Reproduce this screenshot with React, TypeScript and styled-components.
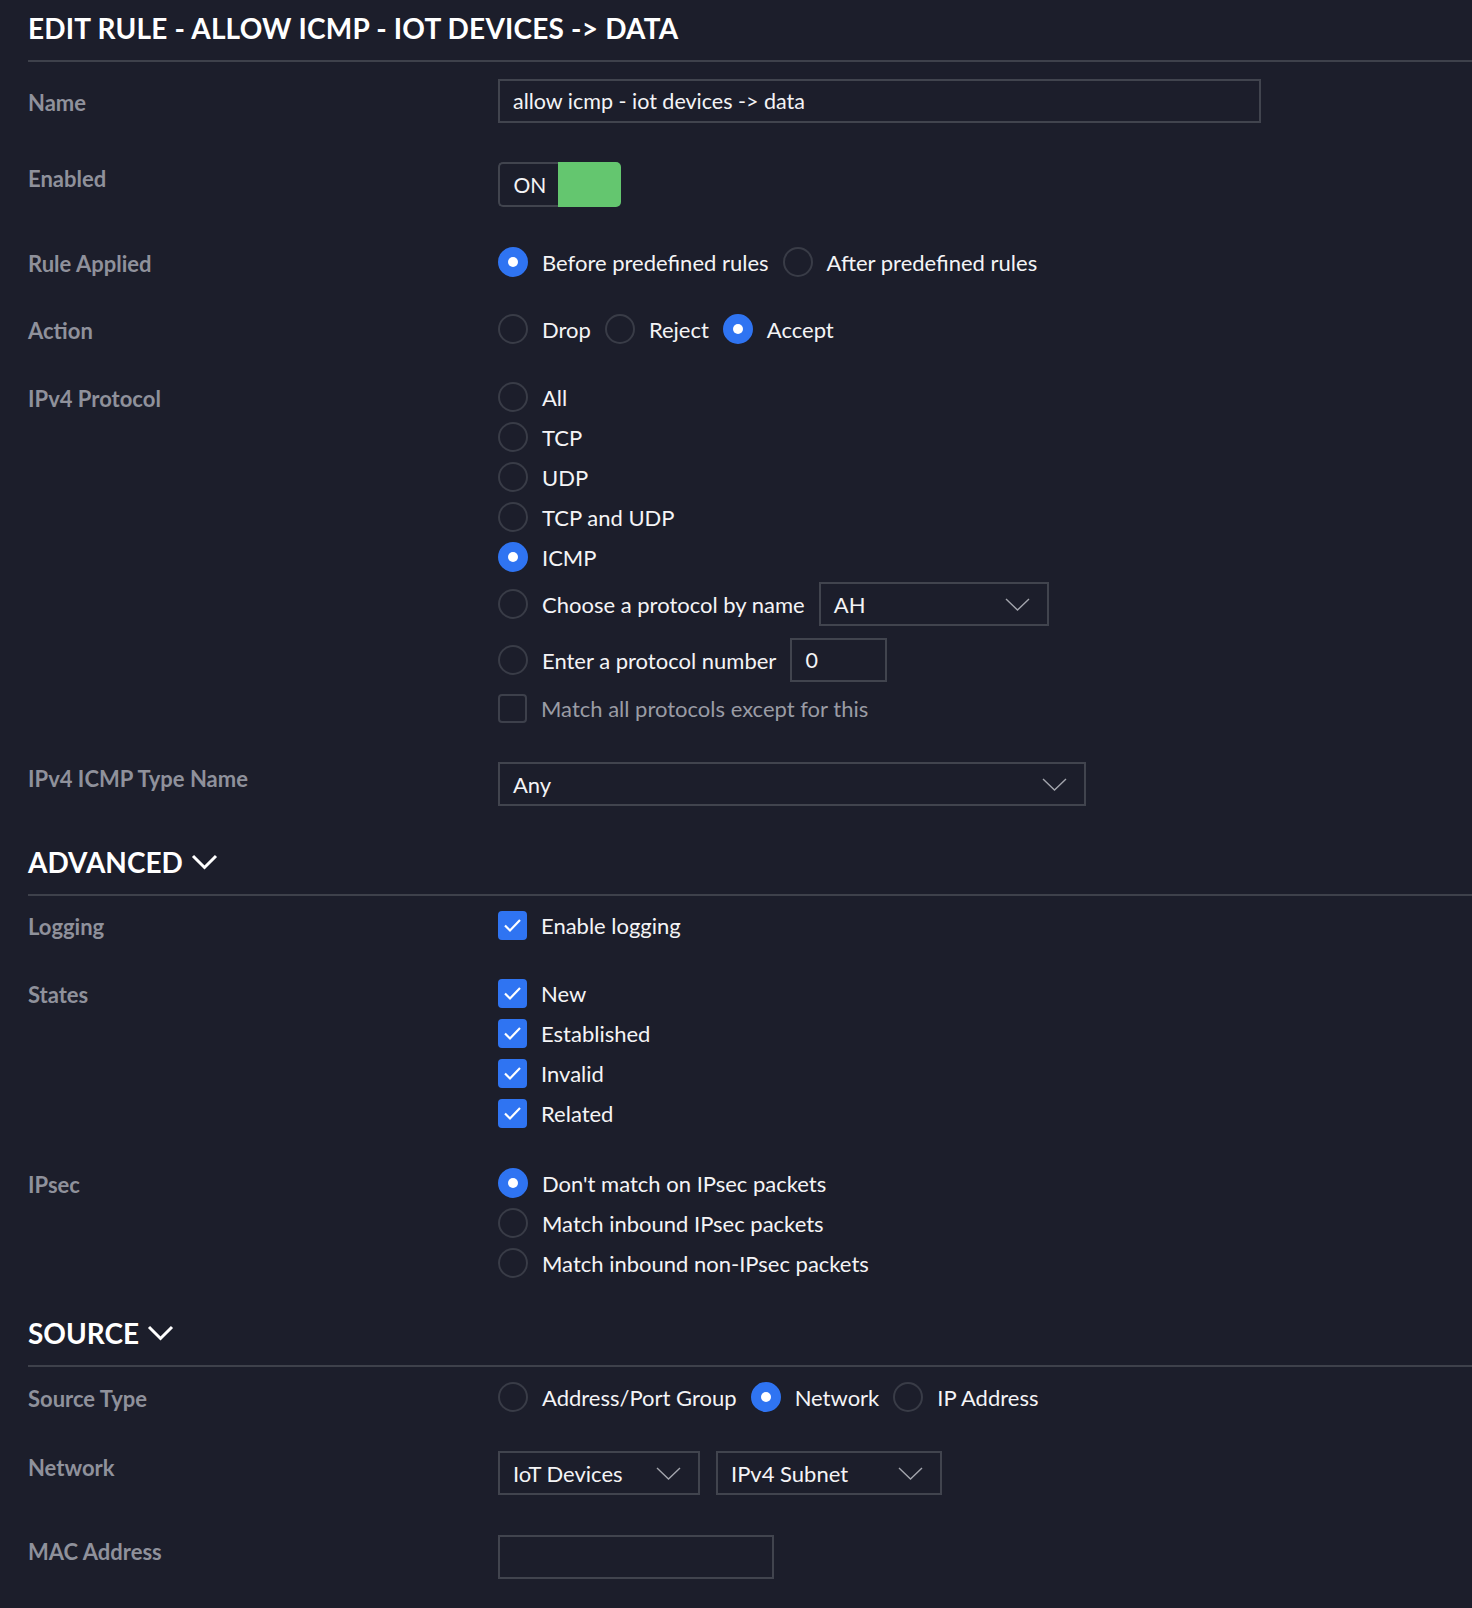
import React from "react";
import styled, { createGlobalStyle } from "styled-components";

const GlobalStyle = createGlobalStyle`
  html, body {
    margin: 0;
    padding: 0;
    background: #1c1e2b;
  }
  body {
    font-family: Lato, "Noto Sans", "Liberation Sans", sans-serif;
    color: #f2f2f4;
  }
  * { box-sizing: border-box; }
`;

const Page = styled.div`
  padding: 0 0 29px 28px;
  background: #1c1e2b;
  min-height: 1608px;
`;

const Header = styled.h2<{ $mt: number; $spacing?: number }>`
  margin: ${(p) => p.$mt}px 0 0 0;
  padding: 0 0 12px 0;
  height: ${40 + 12 + 2}px;
  line-height: 40px;
  font-size: 28px;
  font-weight: 700;
  letter-spacing: ${(p) => p.$spacing ?? 0}px;
  text-transform: uppercase;
  color: #ffffff;
  border-bottom: 2px solid #3e414b;
  display: flex;
  align-items: center;
  gap: 8px;
`;

const Row = styled.div<{ $mt: number; $center?: boolean }>`
  display: grid;
  grid-template-columns: 470px 1fr;
  margin-top: ${(p) => p.$mt}px;
  align-items: ${(p) => (p.$center ? "center" : "start")};
`;

const Label = styled.div`
  font-size: 22px;
  font-weight: 700;
  line-height: 34px;
  margin-bottom: -4px;
  color: #8f919b;
`;

const Stack = styled.div`
  display: flex;
  flex-direction: column;
  gap: 10px;
`;

const Inline = styled.div<{ $gap?: number }>`
  display: flex;
  align-items: center;
  gap: ${(p) => p.$gap ?? 14}px;
`;

const Option = styled.div<{ $tall?: boolean; $mt?: number; $muted?: boolean }>`
  display: flex;
  align-items: center;
  gap: 14px;
  height: ${(p) => (p.$tall ? 44 : 30)}px;
  margin-top: ${(p) => p.$mt ?? 0}px;
  font-size: 22px;
  color: ${(p) => (p.$muted ? "#9a9ca5" : "#f4f4f6")};
  white-space: nowrap;
`;

const RadioCircle = styled.span<{ $on?: boolean }>`
  width: 30px;
  height: 30px;
  flex: none;
  border-radius: 50%;
  border: 2px solid ${(p) => (p.$on ? "#2f74f2" : "#393c47")};
  background: ${(p) => (p.$on ? "#2f74f2" : "transparent")};
  display: flex;
  align-items: center;
  justify-content: center;
  &::after {
    content: "";
    display: ${(p) => (p.$on ? "block" : "none")};
    width: 10px;
    height: 10px;
    border-radius: 50%;
    background: #ffffff;
  }
`;

const CheckBox = styled.span<{ $on?: boolean }>`
  width: 29px;
  height: 29px;
  flex: none;
  border-radius: 4px;
  border: 2px solid ${(p) => (p.$on ? "#2f74f2" : "#3d404b")};
  background: ${(p) => (p.$on ? "#2f74f2" : "transparent")};
  display: flex;
  align-items: center;
  justify-content: center;
`;

const Field = styled.input<{ $w: number }>`
  width: ${(p) => p.$w}px;
  height: 44px;
  padding: 0 13px;
  background: transparent;
  border: 2px solid #41444e;
  border-radius: 0;
  color: #f4f4f6;
  font-family: Lato, "Noto Sans", sans-serif;
  font-size: 21.5px;
  outline: none;
  flex: none;
`;

const SelectBox = styled.div<{ $w: number }>`
  width: ${(p) => p.$w}px;
  height: 44px;
  padding: 0 17px 0 13px;
  border: 2px solid #41444e;
  display: flex;
  align-items: center;
  justify-content: space-between;
  font-size: 22px;
  color: #f4f4f6;
  flex: none;
`;

const Toggle = styled.div`
  display: flex;
  width: 123px;
  height: 45px;
`;

const ToggleLabel = styled.div`
  width: 60px;
  border: 2px solid #41444e;
  border-right: none;
  border-radius: 5px 0 0 5px;
  display: flex;
  align-items: center;
  justify-content: center;
  font-size: 21px;
  color: #f4f4f6;
  padding-left: 2px;
`;

const ToggleKnob = styled.div`
  flex: 1;
  background: #64c66f;
  border-radius: 0 5px 5px 0;
`;

const Chevron = () => (
  <svg width="25" height="13" viewBox="0 0 25 13" fill="none">
    <polyline points="1,1 12.5,12 24,1" stroke="#a3a5ad" strokeWidth="1.4" />
  </svg>
);

const HeaderChevron = () => (
  <svg width="27" height="16" viewBox="0 0 27 16" fill="none">
    <polyline points="2,2 13.5,13.5 25,2" stroke="#ffffff" strokeWidth="3" />
  </svg>
);

const Check = () => (
  <svg width="19" height="15" viewBox="0 0 19 15" fill="none">
    <polyline points="2,7.5 7,12.5 17,2" stroke="#ffffff" strokeWidth="2.2" />
  </svg>
);

const Radio = ({ on, children }: { on?: boolean; children: React.ReactNode }) => (
  <Option>
    <RadioCircle $on={on} />
    {children}
  </Option>
);

const Checkbox = ({ on, muted, children }: { on?: boolean; muted?: boolean; children: React.ReactNode }) => (
  <Option $muted={muted}>
    <CheckBox $on={on}>{on && <Check />}</CheckBox>
    {children}
  </Option>
);

const Select = ({ w, value }: { w: number; value: string }) => (
  <SelectBox $w={w}>
    <span>{value}</span>
    <Chevron />
  </SelectBox>
);

export default function App() {
  return (
    <>
      <GlobalStyle />
      <Page>
        <Header $mt={8} $spacing={0.2}>
          Edit Rule - Allow ICMP - IoT Devices -&gt; Data
        </Header>

        <Row $mt={17} $center>
          <Label>Name</Label>
          <div>
            <Field $w={763} readOnly value="allow icmp - iot devices -> data" />
          </div>
        </Row>

        <Row $mt={39}>
          <Label>Enabled</Label>
          <Toggle>
            <ToggleLabel>ON</ToggleLabel>
            <ToggleKnob />
          </Toggle>
        </Row>

        <Row $mt={40}>
          <Label>Rule Applied</Label>
          <Inline>
            <Radio on>Before predefined rules</Radio>
            <Radio>After predefined rules</Radio>
          </Inline>
        </Row>

        <Row $mt={37}>
          <Label>Action</Label>
          <Inline>
            <Radio>Drop</Radio>
            <Radio>Reject</Radio>
            <Radio on>Accept</Radio>
          </Inline>
        </Row>

        <Row $mt={38}>
          <Label>IPv4 Protocol</Label>
          <Stack>
            <Radio>All</Radio>
            <Radio>TCP</Radio>
            <Radio>UDP</Radio>
            <Radio>TCP and UDP</Radio>
            <Radio on>ICMP</Radio>
            <Option $tall>
              <RadioCircle />
              Choose a protocol by name
              <Select w={230} value="AH" />
            </Option>
            <Option $tall $mt={2}>
              <RadioCircle />
              Enter a protocol number
              <Field $w={97} readOnly value="0" />
            </Option>
            <Option $mt={1} $muted>
              <CheckBox />
              Match all protocols except for this
            </Option>
          </Stack>
        </Row>

        <Row $mt={39}>
          <Label>IPv4 ICMP Type Name</Label>
          <div>
            <Select w={588} value="Any" />
          </div>
        </Row>

        <Header $mt={36}>
          Advanced <HeaderChevron />
        </Header>

        <Row $mt={14}>
          <Label>Logging</Label>
          <Checkbox on>Enable logging</Checkbox>
        </Row>

        <Row $mt={38}>
          <Label>States</Label>
          <Stack>
            <Checkbox on>New</Checkbox>
            <Checkbox on>Established</Checkbox>
            <Checkbox on>Invalid</Checkbox>
            <Checkbox on>Related</Checkbox>
          </Stack>
        </Row>

        <Row $mt={40}>
          <Label>IPsec</Label>
          <Stack>
            <Radio on>Don't match on IPsec packets</Radio>
            <Radio>Match inbound IPsec packets</Radio>
            <Radio>Match inbound non-IPsec packets</Radio>
          </Stack>
        </Row>

        <Header $mt={35}>
          Source <HeaderChevron />
        </Header>

        <Row $mt={15}>
          <Label>Source Type</Label>
          <Inline>
            <Radio>Address/Port Group</Radio>
            <Radio on>Network</Radio>
            <Radio>IP Address</Radio>
          </Inline>
        </Row>

        <Row $mt={39}>
          <Label>Network</Label>
          <Inline $gap={16}>
            <Select w={202} value="IoT Devices" />
            <Select w={226} value="IPv4 Subnet" />
          </Inline>
        </Row>

        <Row $mt={40}>
          <Label>MAC Address</Label>
          <div>
            <Field $w={276} readOnly value="" />
          </div>
        </Row>
      </Page>
    </>
  );
}
